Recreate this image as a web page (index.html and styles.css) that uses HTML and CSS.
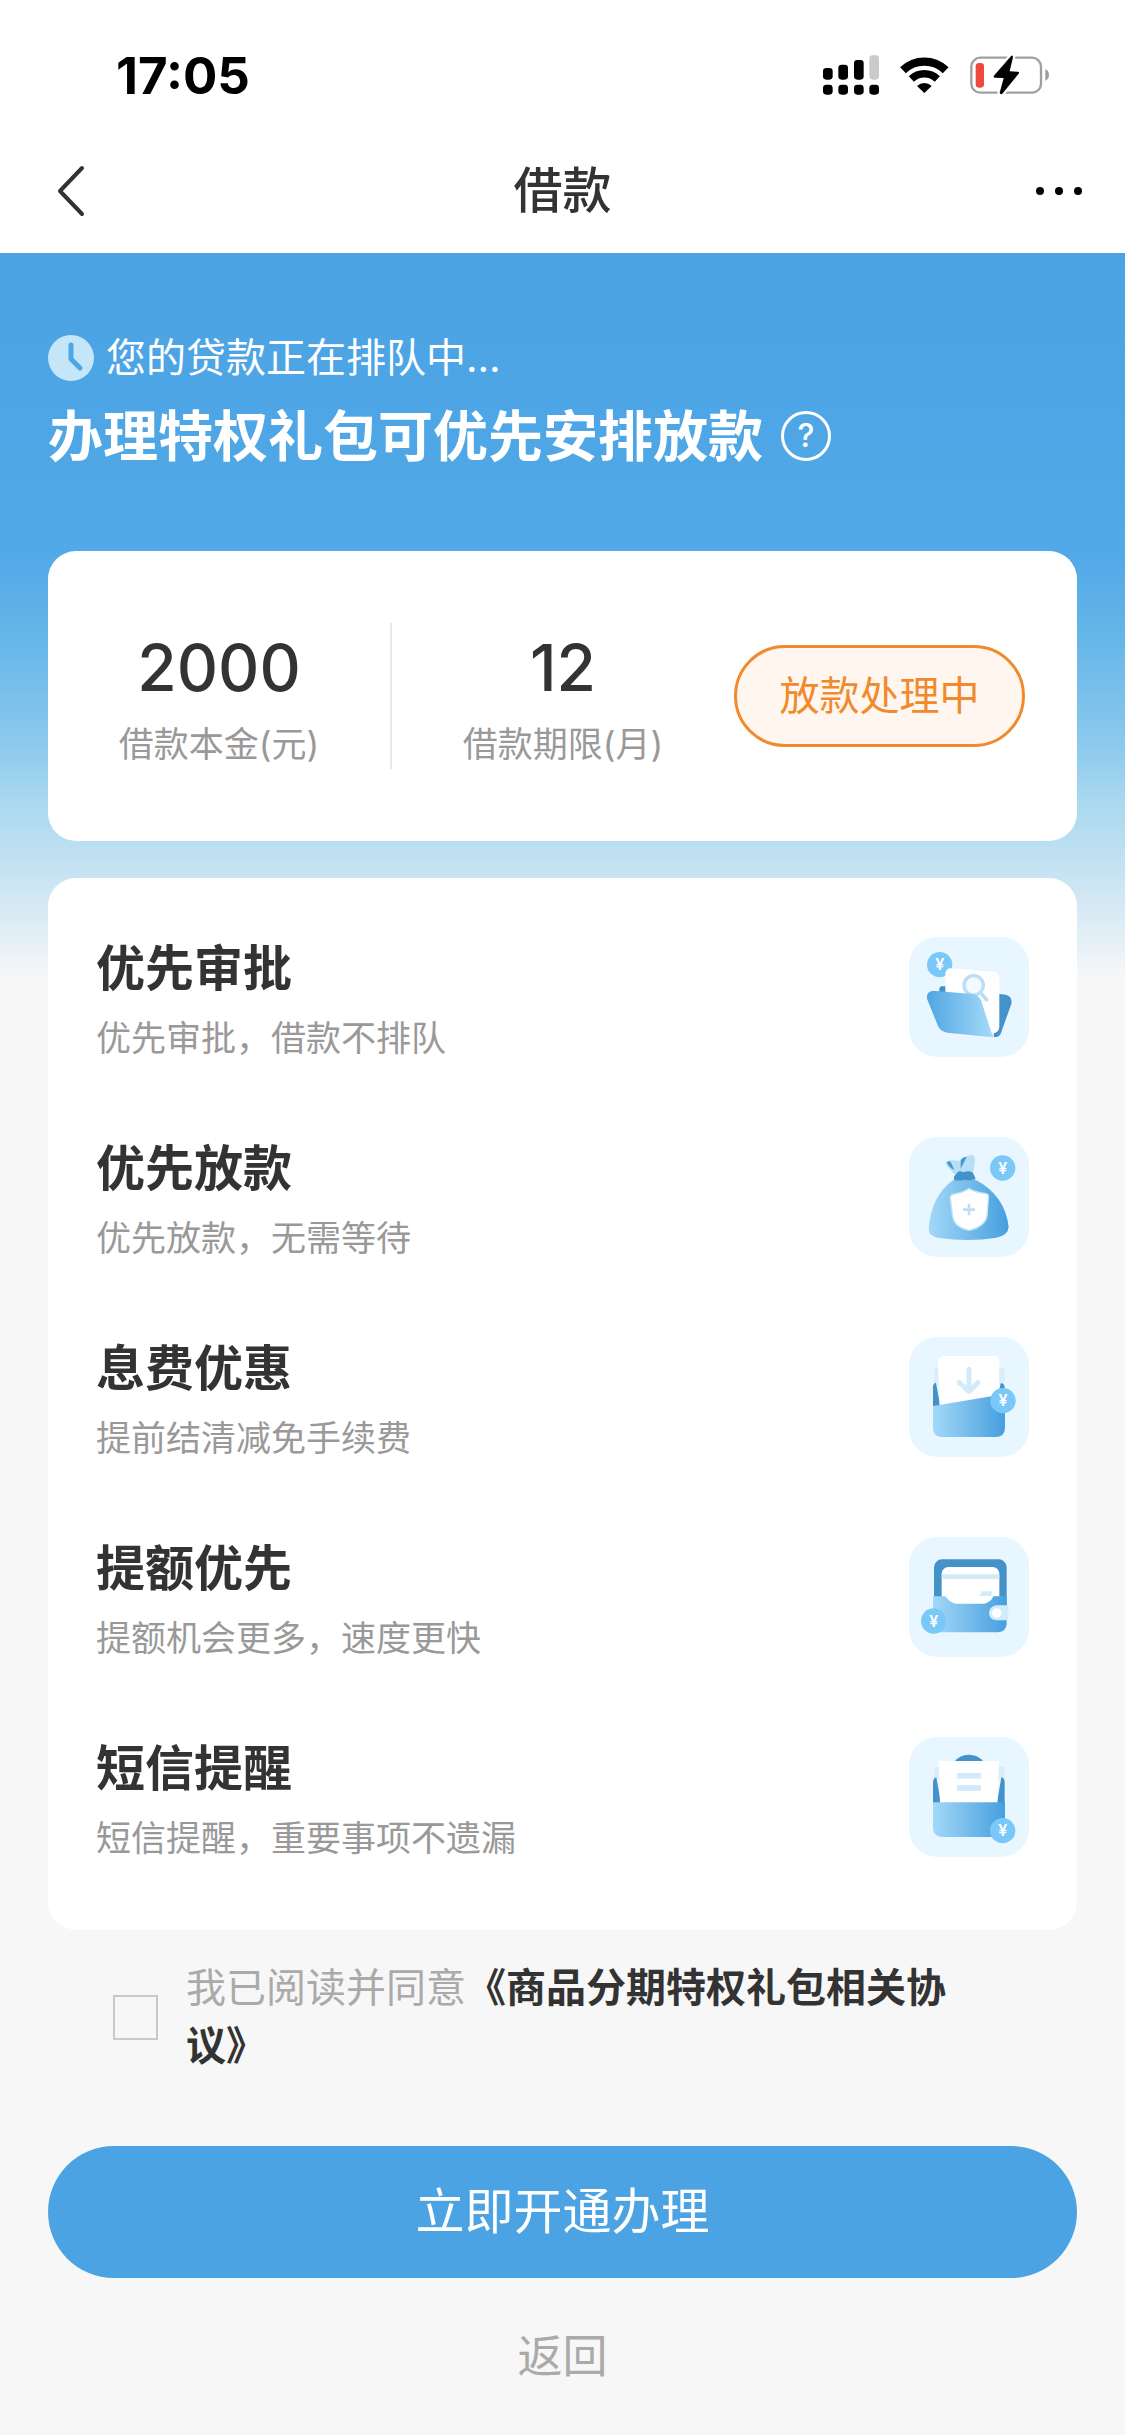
FILE: index.html
```html
<!DOCTYPE html>
<html lang="zh-CN">
<head>
    <meta charset="UTF-8">
    <meta name="viewport" content="width=device-width, initial-scale=1.0">
    <title>借款</title>
    <link rel="stylesheet" href="styles.css">
</head>
<body>
    <header class="top">
        <div class="status-bar">
            <span class="time">17:05</span>
            <svg class="status-icons" viewBox="66 40 690 126" aria-hidden="true">
                <!-- signal -->
                <rect x="69" y="82" width="29" height="35" rx="10"/>
                <rect x="115" y="72" width="29" height="45" rx="10"/>
                <rect x="162" y="58" width="29" height="59" rx="10"/>
                <rect x="208" y="44" width="29" height="73" rx="10" fill="#cbcbcb"/>
                <rect x="69" y="132" width="29" height="30" rx="10"/>
                <rect x="115" y="132" width="29" height="30" rx="10"/>
                <rect x="162" y="132" width="29" height="30" rx="10"/>
                <rect x="208" y="132" width="29" height="30" rx="10"/>
                <!-- wifi -->
                <path d="M309 89A92 92 0 0 1 437 89" fill="none" stroke="#000" stroke-width="25"/>
                <path d="M334 115A56 56 0 0 1 412 115" fill="none" stroke="#000" stroke-width="22"/>
                <path d="M373 157L351 136A31 31 0 0 1 395 136Z"/>
                <!-- battery -->
                <rect x="514" y="51" width="209" height="105" rx="27" fill="none" stroke="#a0a0a0" stroke-width="7"/>
                <path d="M736 86Q747 90 747 103T736 120Z" fill="#a0a0a0"/>
                <rect x="527" y="67" width="25" height="74" rx="10" fill="#ee4a3b"/>
                <path d="M634 45L581 106Q580 111 586 111L611 112L599 156Q601 163 607 159L657 98Q658 93 653 93L629 92L639 50Q639 44 634 45Z" stroke="#fff" stroke-width="14" paint-order="stroke"/>
            </svg>
        </div>
        <nav class="nav-bar">
            <button class="nav-button" type="button" aria-label="返回上一页">
                <svg class="nav-icon" viewBox="0 0 50 54"><path d="M42 4L20 27L42 50" fill="none" stroke="#333" stroke-width="4" stroke-linecap="round" stroke-linejoin="round"/></svg>
            </button>
            <h1 class="nav-title">借款</h1>
            <button class="nav-button" type="button" aria-label="更多">
                <svg class="nav-icon" viewBox="0 0 50 54"><circle cx="5" cy="27" r="4"/><circle cx="24" cy="27" r="4"/><circle cx="43" cy="27" r="4"/></svg>
            </button>
        </nav>
    </header>

    <main class="content">
        <p class="queue">
            <svg class="clock" viewBox="0 0 46 46" aria-hidden="true">
                <circle cx="23" cy="23" r="23" fill="#c5e6f8"/>
                <path d="M23 10V24L32 33" fill="none" stroke="#4fa6e5" stroke-width="5" stroke-linecap="round" stroke-linejoin="round"/>
            </svg>
            您的贷款正在排队中…
        </p>
        <div class="headline">
            <h2 class="headline-text">办理特权礼包可优先安排放款</h2>
            <button class="help" type="button" aria-label="说明">?</button>
        </div>

        <section class="card loan">
            <div class="stat">
                <p class="stat-value">2000</p>
                <p class="stat-label">借款本金(元)</p>
            </div>
            <div class="divider"></div>
            <div class="stat">
                <p class="stat-value">12</p>
                <p class="stat-label">借款期限(月)</p>
            </div>
            <button class="loan-status" type="button">放款处理中</button>
        </section>

        <ul class="card benefits">
            <li class="benefit">
                <div>
                    <h3 class="benefit-title">优先审批</h3>
                    <p class="benefit-text">优先审批，借款不排队</p>
                </div>
                <svg class="benefit-icon" viewBox="56 52 360 360" aria-hidden="true">
                    <defs>
                        <linearGradient id="fade-out"><stop offset="0" stop-color="#4fa6e3"/><stop offset="1" stop-color="#a6daf9"/></linearGradient>
                        <linearGradient id="fade-in"><stop offset="0" stop-color="#a3d8f8"/><stop offset="1" stop-color="#469fde"/></linearGradient>
                        <g id="coin">
                            <circle r="38" fill="#7ac8f8"/>
                            <text class="coin-sign" y="17">¥</text>
                        </g>
                    </defs>
                    <use href="#coin" x="148" y="135"/>
                    <path d="M147 230V207Q148 200 155 200H176V230Z" fill="#4492ca"/>
                    <path d="M322 222L346 225Q367 230 363 253L331 342Q326 353 310 352Z" fill="#4492ca"/>
                    <path d="M182 146L310 156Q327 158 327 176V322Q325 339 308 341L165 230V162Q167 146 182 146Z" fill="#fff"/>
                    <circle cx="250" cy="197" r="29" fill="#f3faff" stroke="#badff5" stroke-width="10"/>
                    <path d="M271 220L289 240" stroke="#badff5" stroke-width="11" stroke-linecap="round"/>
                    <path d="M128 213L246 223Q264 225 272 242L308 353L171 339Q151 336 143 319L110 237Q107 216 128 213Z" fill="url(#fade-out)"/>
                </svg>
            </li>
            <li class="benefit">
                <div>
                    <h3 class="benefit-title">优先放款</h3>
                    <p class="benefit-text">优先放款，无需等待</p>
                </div>
                <svg class="benefit-icon" viewBox="56 52 360 360" aria-hidden="true">
                    <path d="M193 164L165 133Q171 121 185 122L212 124Q218 107 246 106Q260 111 249 153L240 164Z" fill="#b6def5"/>
                    <path d="M169 128Q180 119 184 133L192 151Q177 145 169 128ZM211 147V121Q219 110 229 113Z" fill="#4b9ace"/>
                    <path d="M190 180Q121 228 115 330Q115 349 146 355Q236 367 318 354Q354 346 355 321Q343 225 255 180Q223 170 190 180Z" fill="url(#fade-in)"/>
                    <path d="M198 162Q206 150 218 158Q235 151 247 158L256 177Q245 184 223 180Q202 185 192 180Q187 172 198 162Z" fill="#4492ca"/>
                    <path d="M236 207Q260 220 288 222Q296 224 294 237L290 289Q284 320 237 332Q192 323 187 290L180 236Q179 225 192 223Q218 219 236 207Z" fill="#fff" stroke="#c4e5f8" stroke-width="4"/>
                    <path d="M236 252V287M218 270H254" stroke="#c0def2" stroke-width="8"/>
                    <use href="#coin" x="337" y="145"/>
                </svg>
            </li>
            <li class="benefit">
                <div>
                    <h3 class="benefit-title">息费优惠</h3>
                    <p class="benefit-text">提前结清减免手续费</p>
                </div>
                <svg class="benefit-icon" viewBox="56 51 360 360" aria-hidden="true">
                    <path d="M132 144H342V188H132Z" fill="#daeefa"/>
                    <path d="M128 260V199Q130 188 137 188L150 260ZM322 235L331 190Q343 188 343 204V240Z" fill="#4492ca"/>
                    <path d="M162 108H310Q327 108 327 124L325 240L148 256L143 126Q144 108 162 108Z" fill="#fff"/>
                    <path d="M236 148V210M207 188L236 214L263 188" fill="none" stroke="#d3eafa" stroke-width="15" stroke-linecap="round" stroke-linejoin="round"/>
                    <path d="M128 258L344 222V324Q343 350 318 351H154Q129 349 128 326Z" fill="url(#fade-in)"/>
                    <use href="#coin" x="338" y="242"/>
                </svg>
            </li>
            <li class="benefit">
                <div>
                    <h3 class="benefit-title">提额优先</h3>
                    <p class="benefit-text">提额机会更多，速度更快</p>
                </div>
                <svg class="benefit-icon" viewBox="56 50 360 360" aria-hidden="true">
                    <rect x="131" y="117" width="218" height="160" rx="24" fill="#4492ca"/>
                    <rect x="154" y="140" width="173" height="130" rx="20" fill="#fff"/>
                    <path d="M154 162H327V176H154Z" fill="#d3ebf9"/>
                    <path d="M274 213H308L302 227H268Z" fill="#d3ebf9"/>
                    <path d="M128 228H166Q177 247 196 250H282Q302 246 309 228H349V311Q347 334 324 336H128Z" fill="url(#fade-in)"/>
                    <path d="M354 255H319Q297 258 296 278Q297 299 319 300H354Z" fill="#d3ecfb"/>
                    <circle cx="319" cy="278" r="14" fill="#fff"/>
                    <use href="#coin" x="130" y="302"/>
                </svg>
            </li>
            <li class="benefit">
                <div>
                    <h3 class="benefit-title">短信提醒</h3>
                    <p class="benefit-text">短信提醒，重要事项不遗漏</p>
                </div>
                <svg class="benefit-icon" viewBox="56 48 360 360" aria-hidden="true">
                    <path d="M132 137H342V175H132Z" fill="#daeefa"/>
                    <path d="M192 122Q209 101 236 101T280 122Z" fill="#4492ca"/>
                    <path d="M128 246V183Q130 169 138 169L152 246ZM320 246L333 169Q343 169 343 184V246Z" fill="#4492ca"/>
                    <path d="M145 120H326L321 246H149Z" fill="#fff"/>
                    <path d="M200 156H272V173H200ZM200 192H272V210H200Z" fill="#d3eafa"/>
                    <path d="M128 244H344V321Q342 346 318 348H154Q129 346 128 322Z" fill="url(#fade-in)"/>
                    <use href="#coin" x="337" y="329"/>
                </svg>
            </li>
        </ul>

        <div class="agreement">
            <input class="agreement-check" type="checkbox" id="agree">
            <p class="agreement-text"><label for="agree">我已阅读并同意</label><a class="agreement-link" href="#">《商品分期特权礼包相关协议》</a></p>
        </div>

        <button class="submit" type="button">立即开通办理</button>
        <a class="back" href="#">返回</a>
    </main>
</body>
</html>
```
FILE: styles.css
```css
* {
    box-sizing: border-box;
}

body {
    margin: 0;
    font-family: Inter, "Noto Sans CJK SC", sans-serif;
    background-color: #f7f7f7;
    color: #333;
}

h1, h2, h3, p, ul {
    margin: 0;
    padding: 0;
}

button {
    font-family: inherit;
    padding: 0;
    border: none;
    background: none;
}

a {
    text-decoration: none;
}

.top {
    background-color: #fff;
}

.status-bar {
    display: flex;
    justify-content: space-between;
    align-items: center;
    height: 128px;
    padding: 22px 73px 0 116px;
}

.time {
    font-size: 51px;
    font-weight: 700;
    color: #000;
}

.status-icons {
    width: 230px;
    height: 42px;
}

.nav-bar {
    display: flex;
    justify-content: space-between;
    align-items: center;
    height: 125px;
    padding: 0 40px;
}

.nav-icon {
    display: block;
    width: 50px;
    height: 54px;
}

.nav-title {
    font-size: 49px;
    font-weight: 500;
    line-height: 62px;
}

.content {
    padding: 77px 48px 48px;
    background: linear-gradient(#4ba2e4 0, #52a9e7 300px, #66b6e8 387px, #8ccaed 494px, #a9d8ef 547px, #bddff2 597px, #d3e8f4 647px, #e6f0f7 690px, #f7f7f7 725px);
}

.queue {
    display: flex;
    align-items: center;
    gap: 12px;
    font-size: 40px;
    line-height: 56px;
    color: #fff;
}

.clock {
    width: 46px;
    height: 46px;
}

.headline {
    display: flex;
    align-items: center;
    gap: 18px;
    margin: 14px 0 79px;
    color: #fff;
}

.headline-text {
    font-size: 55px;
    font-weight: 700;
    line-height: 72px;
}

.help {
    width: 50px;
    height: 50px;
    border: 3px solid #fff;
    border-radius: 50%;
    font-size: 32px;
    font-weight: 500;
    line-height: 44px;
    color: #fff;
}

.card {
    background-color: #fff;
    border-radius: 28px;
}

.loan {
    display: flex;
    align-items: center;
    height: 290px;
    padding-right: 52px;
}

.stat {
    flex: 1;
    text-align: center;
}

.stat-value {
    font-size: 64px;
    font-weight: 500;
    line-height: 80px;
    margin-bottom: 16px;
}

.stat-label {
    font-size: 35px;
    line-height: 40px;
    color: #999;
}

.divider {
    width: 2px;
    height: 146px;
    background-color: #e8e8e8;
}

.loan-status {
    width: 291px;
    height: 102px;
    border: 3px solid #f08a2c;
    border-radius: 51px;
    background-color: #fff6f0;
    font-size: 40px;
    line-height: 96px;
    color: #f08a2c;
}

.benefits {
    display: flex;
    flex-direction: column;
    gap: 80px;
    margin-top: 37px;
    padding: 59px 48px 73px;
    list-style: none;
}

.benefit {
    display: flex;
    justify-content: space-between;
}

.benefit-title {
    font-size: 49px;
    font-weight: 700;
    line-height: 64px;
    margin-bottom: 18px;
}

.benefit-text {
    font-size: 35px;
    line-height: 38px;
    color: #999;
}

.benefit-icon {
    width: 120px;
    height: 120px;
    border-radius: 28px;
    background-color: #e8f6ff;
}

.coin-sign {
    font-size: 48px;
    font-weight: 600;
    fill: #fff;
    text-anchor: middle;
}

.agreement {
    display: flex;
    align-items: center;
    gap: 28px;
    margin-top: 29px;
    padding: 0 110px 0 65px;
}

.agreement-check {
    appearance: none;
    flex: none;
    width: 45px;
    height: 45px;
    margin: 0;
    border: 2px solid #c8c9cc;
}

.agreement-text {
    font-size: 40px;
    line-height: 58px;
    color: #aaa;
}

.agreement-link {
    font-weight: 700;
    color: #333;
}

.submit {
    display: block;
    width: 100%;
    height: 132px;
    margin-top: 71px;
    border-radius: 66px;
    background-color: #4ba3e3;
    font-size: 49px;
    line-height: 132px;
    color: #fff;
}

.back {
    display: block;
    margin-top: 49px;
    font-size: 45px;
    line-height: 60px;
    text-align: center;
    color: #aaa;
}
```
